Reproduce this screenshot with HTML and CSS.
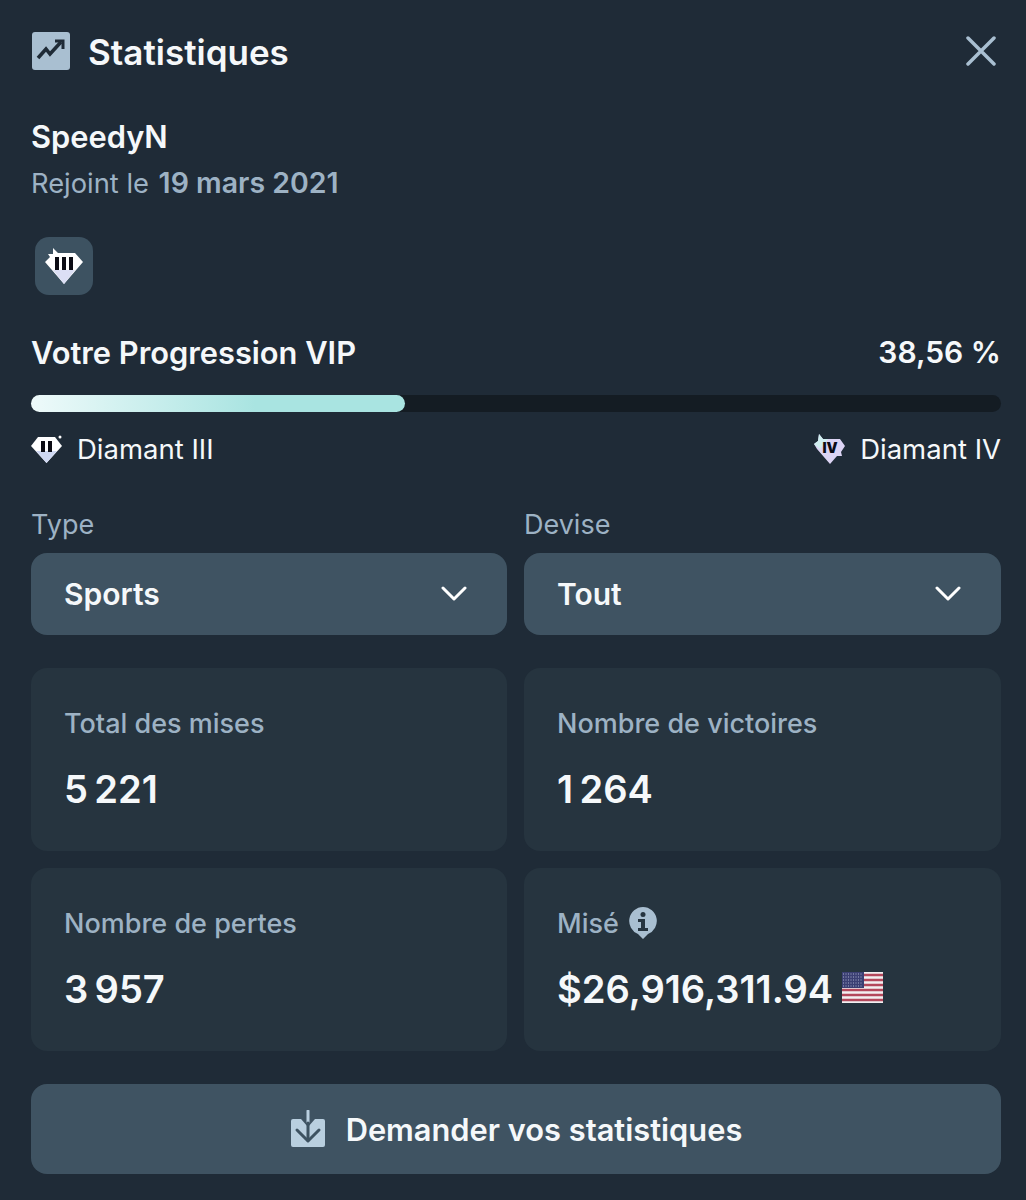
FILE: index.html
```html
<!DOCTYPE html>
<html lang="fr">

<head>
  <meta charset="UTF-8">
  <meta name="viewport" content="width=device-width, initial-scale=1">
  <title>Statistiques</title>

  <link rel="stylesheet" href="styles.css">
</head>

<body>
  <div class="modal">
    <div class="header">
      <div class="titre">
        <svg class="titre_icone" viewBox="0 0 38 38">
          <rect width="38" height="38" rx="3" fill="#a9bfd1" />
          <path d="M6 26 L14 17 L18 22 L29 10" fill="none" stroke="#1f2b37" stroke-width="3.500" />
          <path d="M23 9 H31 V17" fill="none" stroke="#1f2b37" stroke-width="3" />
        </svg>
        <h1>Statistiques</h1>
      </div>
      <svg class="fechar" viewBox="0 0 30 30">
        <path d="M2 2 L28 28 M28 2 L2 28" stroke="#a9bfd1" stroke-width="3.500" stroke-linecap="round" />
      </svg>
    </div>

    <p class="nome">SpeedyN</p>
    <p class="rejoint">Rejoint le <b>19 mars 2021</b></p>

    <div class="badge">
      <svg class="diamant_grande" viewBox="0 0 38 36">
        <path d="M8 0 L13 5 H30 L38 14 L19 36 L0 14 L5 9 L3 6 L8 6 Z" fill="#fff" />
        <path d="M8 22 L19 22 L30 22 L19 36 Z" fill="#dcdff5" />
        <rect x="10" y="9" width="4" height="13" fill="#0c0c14" />
        <rect x="17" y="9" width="4" height="13" fill="#0c0c14" />
        <rect x="24" y="9" width="4" height="13" fill="#0c0c14" />
      </svg>
    </div>

    <div class="progresso_topo">
      <span>Votre Progression VIP</span>
      <span class="progresso_valor">38,56 %</span>
    </div>
    <div class="barra">
      <div class="barra_cheia" style="width: 38.56%"></div>
    </div>
    <div class="niveis">
      <div class="nivel">
        <svg class="diamant" viewBox="0 0 32 28">
          <path d="M7 2 H24 L31 11 L15.500 28 L0 11 Z" fill="#fff" />
          <path d="M5 16 H26 L15.500 28 Z" fill="#cfd8f2" />
          <rect x="10" y="6" width="4" height="11" fill="#0c0c14" />
          <rect x="17" y="6" width="4" height="11" fill="#0c0c14" />
          <circle cx="29" cy="2" r="1.500" fill="#fff" />
        </svg>
        <span>Diamant III</span>
      </div>
      <div class="nivel">
        <svg class="diamant" viewBox="0 0 32 30">
          <path d="M5 0 L9 5 H26 L31 12 L27 18 L28 22 L23 22 L16 30 L3 15 L0 10 L4 7 Z" fill="#dcd4f4" />
          <path d="M0 10 L4 7 L5 0 L9 5 H14 L6 15 Z" fill="#cfeef0" />
          <text x="16" y="19" class="diamant_texto">IV</text>
        </svg>
        <span>Diamant IV</span>
      </div>
    </div>

    <div class="grade">
      <div>
        <p class="rotulo">Type</p>
        <div class="seletor">
          <span>Sports</span>
          <svg class="seta" viewBox="0 0 26 16">
            <path d="M2 2 L13 13 L24 2" fill="none" stroke="#fff" stroke-width="3" stroke-linecap="round" stroke-linejoin="round" />
          </svg>
        </div>
      </div>
      <div>
        <p class="rotulo">Devise</p>
        <div class="seletor">
          <span>Tout</span>
          <svg class="seta" viewBox="0 0 26 16">
            <path d="M2 2 L13 13 L24 2" fill="none" stroke="#fff" stroke-width="3" stroke-linecap="round" stroke-linejoin="round" />
          </svg>
        </div>
      </div>
    </div>

    <div class="grade cartoes">
      <div class="cartao">
        <p class="cartao_rotulo">Total des mises</p>
        <p class="cartao_valor">5&#8239;221</p>
      </div>
      <div class="cartao">
        <p class="cartao_rotulo">Nombre de victoires</p>
        <p class="cartao_valor">1&#8239;264</p>
      </div>
      <div class="cartao">
        <p class="cartao_rotulo">Nombre de pertes</p>
        <p class="cartao_valor">3&#8239;957</p>
      </div>
      <div class="cartao">
        <p class="cartao_rotulo">Misé
          <svg class="info" viewBox="0 0 28 32">
            <path d="M14 0 A14 14 0 0 1 19 27 L14 32 L9 27 A14 14 0 0 1 14 0 Z" fill="#a9bfd1" />
            <circle cx="14" cy="7.500" r="2.500" fill="#26343f" />
            <path d="M9 12 H16 V21 H19 V24 H9 V21 H12 V15 H9 Z" fill="#26343f" />
          </svg>
        </p>
        <p class="cartao_valor">$26,916,311.94
          <svg class="bandeira" viewBox="0 0 41 31">
            <rect width="41" height="31" fill="#f3f0f2" />
            <path d="M0 3 H41 M0 8 H41 M0 13 H41 M0 18 H41 M0 23 H41 M0 28 H41" stroke="#b4485c" stroke-width="2.500" />
            <rect width="22" height="16" fill="#3b3f73" />
            <path d="M1 2 H21 M1 5 H21 M1 8 H21 M1 11 H21 M1 14 H21" stroke="#aab0cc" stroke-width="1" stroke-dasharray="1 1.500" />
          </svg>
        </p>
      </div>
    </div>

    <div class="botao">
      <svg class="botao_icone" viewBox="0 0 36 38">
        <path d="M3 9 H11 L18 17 L25 9 H33 A2 2 0 0 1 35 11 V35 A2 2 0 0 1 33 37 H3 A2 2 0 0 1 1 35 V11 A2 2 0 0 1 3 9 Z" fill="#b9cfdf" />
        <path d="M7 20 L18 31 L29 20" fill="none" stroke="#3d5261" stroke-width="3" stroke-linecap="round" stroke-linejoin="round" />
        <path d="M18 1 V12" fill="none" stroke="#b9cfdf" stroke-width="3" stroke-linecap="round" />
        <path d="M18 13 V30" fill="none" stroke="#3d5261" stroke-width="3" stroke-linecap="round" />
      </svg>
      <span>Demander vos statistiques</span>
    </div>
  </div>
</body>

</html>
```

FILE: styles.css
```css
* {
  margin: 0;
  padding: 0;
  box-sizing: border-box;
}

body {
  background-color: #1f2b37;
  font-family: "Inter", "Liberation Sans", sans-serif;
  color: #f5f8fa;
}

.modal {
  display: flex;
  flex-direction: column;
  height: 1200px;
  padding: 32px 25px 0 31px;
}

.header {
  display: flex;
  justify-content: space-between;
  align-items: center;
  height: 38px;
}

.titre {
  display: flex;
  align-items: center;
  gap: 18px;
  padding-left: 1px;
}

.titre_icone {
  width: 38px;
  height: 38px;
}

.titre h1 {
  padding-top: 2px;
  font-size: 35px;
  font-weight: 600;
  line-height: 38px;
}

.fechar {
  width: 30px;
  height: 30px;
  margin-right: 5px;
}

.nome {
  margin-top: 49px;
  font-size: 30.800px;
  font-weight: 600;
  line-height: 36px;
}

.rejoint {
  margin-top: 11px;
  font-size: 27.300px;
  line-height: 34px;
  color: #9db2c4;
}

.rejoint b {
  font-size: 28.500px;
  font-weight: 600;
  margin-left: 2px;
}

.badge {
  display: flex;
  justify-content: center;
  align-items: center;
  width: 58px;
  height: 58px;
  margin: 36px 0 0 4px;
  background-color: #3d5261;
  border-radius: 14px;
}

.diamant_grande {
  width: 38px;
  height: 36px;
}

.progresso_topo {
  display: flex;
  justify-content: space-between;
  align-items: center;
  margin-top: 38px;
  height: 40px;
  padding-bottom: 2px;
  font-size: 30.800px;
  font-weight: 600;
}

.progresso_valor {
  font-size: 30px;
}

.barra {
  height: 17px;
  margin-top: 22px;
  background-color: #141c23;
  border-radius: 9px;
}

.barra_cheia {
  height: 100%;
  background: linear-gradient(90deg, #eefafa 0%, #a9e4e1 60%, #a9e4e1 100%);
  border-radius: 9px;
}

.niveis {
  display: flex;
  justify-content: space-between;
  margin-top: 19px;
}

.nivel {
  display: flex;
  align-items: center;
  gap: 14px;
  height: 36px;
  font-size: 27.500px;
}

.diamant {
  width: 32px;
  height: 30px;
}

.diamant_texto {
  font-size: 14px;
  font-weight: 900;
  text-anchor: middle;
  fill: #0c0c14;
}

.grade {
  display: grid;
  grid-template-columns: 476px 1fr;
  gap: 17px;
  margin-top: 39px;
}

.rotulo {
  padding-top: 2px;
  font-size: 27px;
  line-height: 34px;
  color: #9db2c4;
}

.seletor {
  display: flex;
  justify-content: space-between;
  align-items: center;
  height: 82px;
  margin-top: 11px;
  padding: 0 40px 0 33px;
  background-color: #3f5362;
  border-radius: 16px;
  font-size: 30px;
  font-weight: 600;
}

.seta {
  width: 26px;
  height: 16px;
}

.cartoes {
  margin-top: 33px;
}

.cartao {
  height: 183px;
  padding: 37px 33px 0;
  background-color: #26343f;
  border-radius: 16px;
}

.cartao_rotulo {
  display: flex;
  align-items: center;
  gap: 10px;
  height: 36px;
  font-size: 27px;
  font-weight: 500;
  color: #9db2c4;
}

.cartao_valor {
  display: flex;
  align-items: center;
  gap: 9px;
  margin-top: 23px;
  height: 50px;
  font-size: 38.100px;
  font-weight: 600;
}

.info {
  width: 28px;
  height: 32px;
}

.bandeira {
  width: 41px;
  height: 31px;
  margin-bottom: 3px;
}

.botao {
  display: flex;
  justify-content: center;
  align-items: center;
  gap: 20px;
  height: 90px;
  margin-top: 33px;
  background-color: #3f5362;
  border-radius: 16px;
  font-size: 30.800px;
  font-weight: 600;
}

.botao_icone {
  width: 36px;
  height: 38px;
}
```
